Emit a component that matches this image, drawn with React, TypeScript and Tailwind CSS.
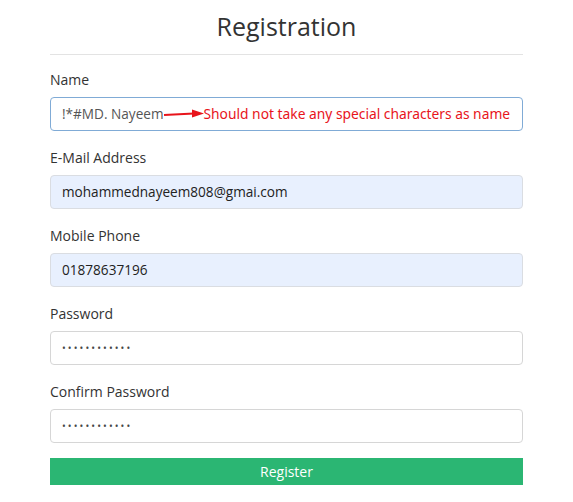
import React from "react";

const font = { fontFamily: '"Open Sans", "Noto Sans", sans-serif' };

function Field({ label, children }: { label: string; children: React.ReactNode }) {
  return (
    <div className="flex flex-col">
      <label className="text-[14px] leading-[20px] text-[#333] mb-[7px]">{label}</label>
      {children}
    </div>
  );
}

export default function App() {
  return (
    <div className="w-[573px] h-[502px] bg-white" style={font}>
      <div className="w-[473px] ml-[50px] pt-[10px]">
        <h1 className="text-center text-[25px] leading-[32px] font-medium text-[#333]">Registration</h1>
        <div className="mt-[12px] border-t border-[#e3e3e3]" />
        <div className="mt-[15px] flex flex-col gap-[17px]">
          <Field label="Name">
            <div className="h-[34px] rounded-[4px] border border-[#80abd6] flex items-center pl-[11px] text-[13.6px] text-[#555]">
              <span>!*#MD. Nayeem</span>
              <svg width="40" height="10" viewBox="0 0 40 10">
                <line x1="0" y1="6" x2="30" y2="4.5" stroke="#e8141b" strokeWidth="2.2" />
                <polygon points="28,0.5 40,4.5 28,8.5" fill="#e8141b" />
              </svg>
              <span className="text-[#e8141b] text-[13.8px]" style={{ fontFamily: '"Noto Sans", sans-serif' }}>
                Should not take any special characters as name
              </span>
            </div>
          </Field>
          <Field label="E-Mail Address">
            <div className="h-[34px] rounded-[4px] border border-[#dadde2] bg-[#e8f0fe] flex items-center pl-[11px] text-[13.6px] text-[#222]">
              mohammednayeem808@gmai.com
            </div>
          </Field>
          <Field label="Mobile Phone">
            <div className="h-[34px] rounded-[4px] border border-[#dadde2] bg-[#e8f0fe] flex items-center pl-[11px] text-[13.6px] text-[#222]">
              01878637196
            </div>
          </Field>
          <Field label="Password">
            <div className="h-[34px] rounded-[4px] border border-[#d6d6d6] flex items-center pl-[11px] text-[10px] tracking-[2.1px] text-[#444]">
              ••••••••••••
            </div>
          </Field>
          <Field label="Confirm Password">
            <div className="h-[34px] rounded-[4px] border border-[#d6d6d6] flex items-center pl-[11px] text-[10px] tracking-[2.1px] text-[#444]">
              ••••••••••••
            </div>
          </Field>
        </div>
        <button className="mt-[15px] w-full h-[27px] bg-[#2bb673] text-white text-[14px] leading-[27px]">
          Register
        </button>
      </div>
    </div>
  );
}
